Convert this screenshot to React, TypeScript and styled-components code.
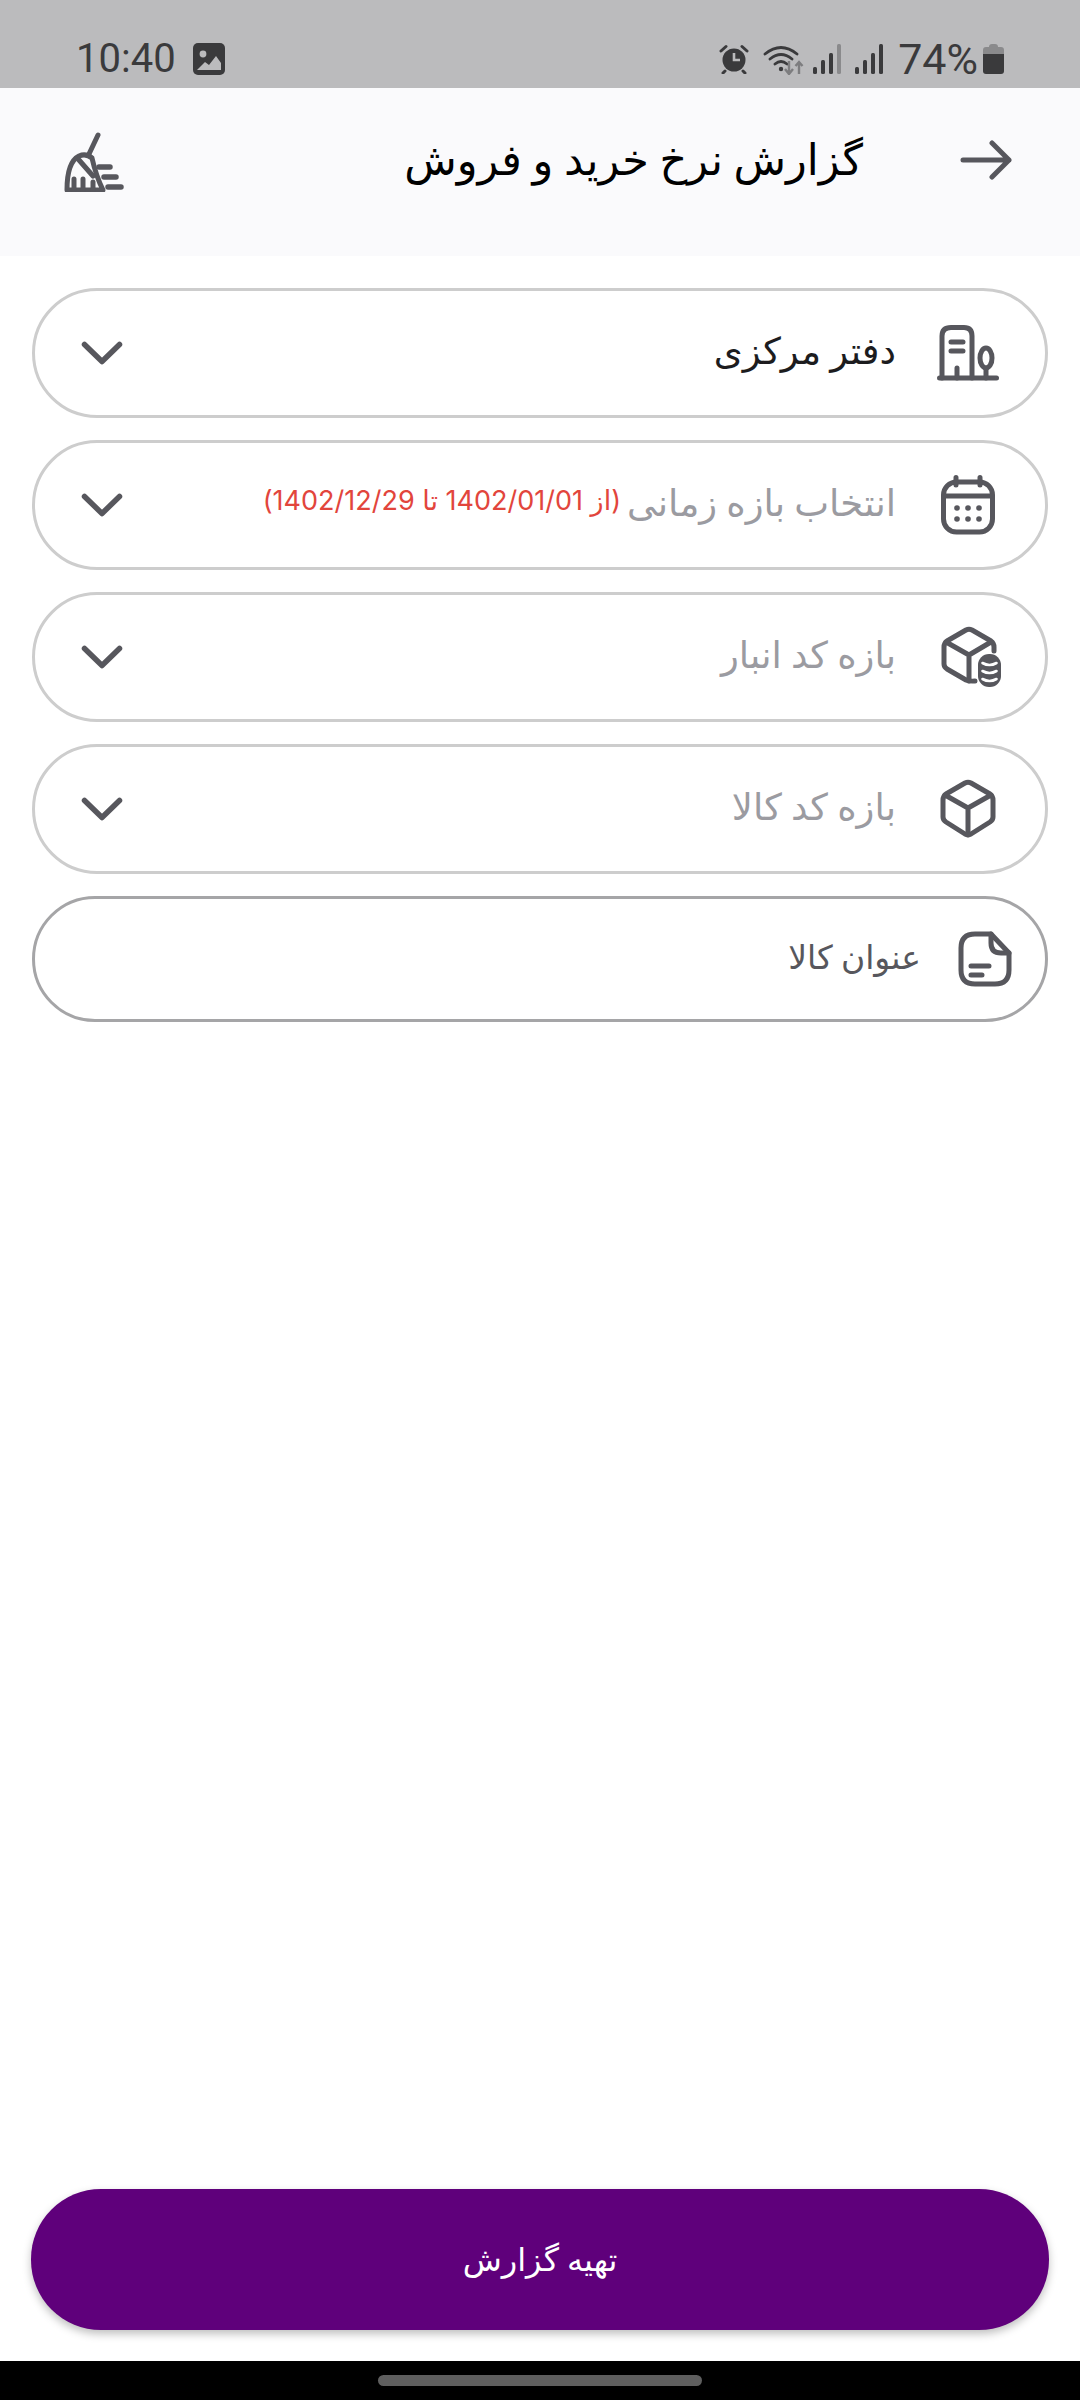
import styled, { createGlobalStyle } from "styled-components";

const GlobalStyle = createGlobalStyle`
  html, body {
    margin: 0;
    padding: 0;
    background: #ffffff;
  }
  * {
    box-sizing: border-box;
  }
`;

const Page = styled.div`
  width: 1080px;
  height: 2400px;
  display: flex;
  flex-direction: column;
  font-family: "Roboto", "DejaVu Sans", sans-serif;
  background: #ffffff;
`;

const StatusBar = styled.div`
  height: 88px;
  flex: none;
  background: #bbbbbd;
  display: flex;
  justify-content: space-between;
  align-items: flex-start;
  padding: 38px 76px 0 76px;
  color: #3a3a3c;
`;

const StatusGroup = styled.div`
  display: flex;
  align-items: center;
  height: 42px;
`;

const Clock = styled.span`
  font-size: 40px;
  line-height: 42px;
  margin-right: 17px;
`;

const Battery = styled.span`
  font-size: 43px;
  line-height: 42px;
  margin: 0 5px 0 15px;
`;

const StatusIcon = styled.svg<{ $gap?: number }>`
  display: block;
  flex: none;
  margin-left: ${(p) => p.$gap ?? 0}px;
`;

const Header = styled.header`
  height: 168px;
  flex: none;
  background: #fafafc;
  direction: rtl;
  display: flex;
  align-items: flex-start;
  padding: 44px 68px 0 64px;
`;

const Title = styled.h1`
  flex: 1;
  margin: 0;
  padding-right: 97px;
  font-size: 43px;
  line-height: 56px;
  font-weight: 400;
  color: #000000;
`;

const BackArrowSlot = styled.div`
  flex: none;
  margin-top: 8px;
`;

const Form = styled.div`
  flex: 1;
  direction: rtl;
  display: flex;
  flex-direction: column;
  gap: 22px;
  padding: 32px 32px 0 32px;
`;

const Row = styled.div<{ $input?: boolean }>`
  height: ${(p) => (p.$input ? 126 : 130)}px;
  border: 3px solid ${(p) => (p.$input ? "#a5a5a7" : "#cdcdcd")};
  border-radius: 65px;
  display: flex;
  align-items: center;
  padding: 0 ${(p) => (p.$input ? 32 : 44)}px 0 46px;
`;

const IconSlot = styled.div<{ $input?: boolean }>`
  width: ${(p) => (p.$input ? 56 : 66)}px;
  flex: none;
  display: flex;
  justify-content: center;
`;

const Label = styled.span<{ $tone: "value" | "hint" | "input" }>`
  margin-right: ${(p) => (p.$tone === "input" ? 36 : 39)}px;
  font-size: ${(p) => (p.$tone === "input" ? 33 : 37)}px;
  line-height: 48px;
  margin-top: -3px;
  white-space: nowrap;
  color: ${(p) =>
    p.$tone === "value" ? "#1c1c1e" : p.$tone === "hint" ? "#9b9ba1" : "#57575d"};
`;

const RangeNote = styled.span`
  font-family: "Inter", "DejaVu Sans", sans-serif;
  font-size: 27px;
  letter-spacing: 0.8px;
  line-height: 48px;
  margin-top: -8px;
  margin-right: 6px;
  white-space: nowrap;
  color: #e2453c;
`;

const Chevron = styled.svg`
  display: block;
  flex: none;
  margin-right: auto;
  margin-top: -1px;
`;

const ActionBar = styled.div`
  padding: 0 31px 31px 31px;
  flex: none;
`;

const ActionButton = styled.button`
  width: 100%;
  height: 141px;
  border: none;
  border-radius: 70px;
  background: #5f007b;
  color: #ffffff;
  font-family: inherit;
  font-size: 32px;
  direction: rtl;
  box-shadow: 0 4px 8px rgba(0, 0, 0, 0.25);
`;

const NavBar = styled.div`
  height: 39px;
  flex: none;
  background: #000000;
  display: flex;
  justify-content: center;
  padding-top: 14px;
`;

const NavHandle = styled.div`
  width: 324px;
  height: 11px;
  border-radius: 6px;
  background: #5f5f5f;
`;

const ink = "#57575d";

function ChevronDown() {
  return (
    <Chevron width="42" height="24" viewBox="0 0 42 24" fill="none" stroke={ink} strokeWidth="5.5" strokeLinecap="round" strokeLinejoin="round">
      <path d="M3.5 3.5 L21 20.5 L38.5 3.5" />
    </Chevron>
  );
}

function BuildingIcon() {
  return (
    <svg width="62" height="56" viewBox="0 0 62 56" fill="none" stroke={ink} strokeWidth="5" strokeLinecap="round">
      <path d="M2.5 53 H59.5" />
      <path d="M5 53 V11 Q5 2.5 14 2.5 H27 Q35 2.5 35 11 V53" />
      <path d="M14 17 H26 M14 26 H26" />
      <path d="M20 53 V43" />
      <ellipse cx="49" cy="33" rx="6" ry="10" />
      <path d="M49 43 V53" />
    </svg>
  );
}

function CalendarIcon() {
  return (
    <svg width="54" height="60" viewBox="0 0 54 60" fill="none" stroke={ink} strokeWidth="5" strokeLinecap="round">
      <rect x="2.5" y="7" width="49" height="50" rx="13" />
      <path d="M3 21 H51" />
      <path d="M15 2.5 V10 M39 2.5 V10" />
      <g fill={ink} stroke="none">
        <circle cx="16" cy="33" r="2.8" />
        <circle cx="27" cy="33" r="2.8" />
        <circle cx="38" cy="33" r="2.8" />
        <circle cx="16" cy="44" r="2.8" />
        <circle cx="27" cy="44" r="2.8" />
        <circle cx="38" cy="44" r="2.8" />
      </g>
    </svg>
  );
}

function BoxStockIcon() {
  return (
    <svg width="66" height="62" viewBox="-6 0 66 62" fill="none" stroke={ink} strokeWidth="5" strokeLinecap="round" strokeLinejoin="round">
      <path d="M53 25 V21 Q53 17 50 15 L31 4 Q28 2.5 25 4 L6 15 Q3 17 3 21 V38 Q3 41 6 43 L25 54 Q28 55.5 34 55" />
      <path d="M5 16 L28 29 L50 16 M28 29 V55" />
      <rect x="37" y="28" width="23" height="33" rx="11" fill={ink} stroke="none" />
      <path d="M41.5 37 Q48.5 41 55.5 37 M41.5 45 Q48.5 49 55.5 45 M41.5 53 Q48.5 57 55.5 53" stroke="#ffffff" strokeWidth="2.6" />
    </svg>
  );
}

function BoxIcon() {
  return (
    <svg width="56" height="60" viewBox="0 0 56 60" fill="none" stroke={ink} strokeWidth="5" strokeLinecap="round" strokeLinejoin="round">
      <path d="M50 15 L31 4 Q28 2.5 25 4 L6 15 Q3 17 3 21 V38 Q3 41 6 43 L25 55 Q28 56.5 31 55 L50 43 Q53 41 53 38 V21 Q53 17 50 15 Z" />
      <path d="M5 16 L28 29 L51 16 M28 29 V56" />
    </svg>
  );
}

function NoteIcon() {
  return (
    <svg width="54" height="56" viewBox="0 0 54 56" fill="none" stroke={ink} strokeWidth="5" strokeLinecap="round" strokeLinejoin="round">
      <path d="M33 3 H17 Q3 3 3 17 V39 Q3 53 17 53 H37 Q51 53 51 39 V22 L33 3 Z" />
      <path d="M33 3 V12 Q33 22 43 22 H51" />
      <path d="M13 35 H31 M13 44 H24" />
    </svg>
  );
}

function BackArrow() {
  return (
    <svg width="52" height="40" viewBox="0 0 52 40" fill="none" stroke={ink} strokeWidth="5" strokeLinecap="round" strokeLinejoin="round">
      <path d="M3 20 H49 M32 3 L49 20 L32 37" />
    </svg>
  );
}

function BroomIcon() {
  return (
    <svg width="60" height="60" viewBox="0 0 60 60" fill="none" stroke={ink} strokeWidth="5" strokeLinecap="round" strokeLinejoin="round">
      <path d="M34 3 L25 22" />
      <path d="M3 58 H39 Q32 44 28 26 Q22 21 15 24 Q3 30 3 58 Z" />
      <path d="M10 58 V47 M19 58 V47 M29 58 V50 M15 28 L29 44" />
      <path d="M35 35 H46 M40 45 H52 M44 55 H57" strokeWidth="5.5" />
    </svg>
  );
}

function App() {
  return (
    <Page>
      <GlobalStyle />
      <StatusBar>
        <StatusGroup>
          <Clock>10:40</Clock>
          <StatusIcon width="32" height="32" viewBox="0 0 32 32">
            <rect width="32" height="32" rx="5" fill="#3a3a3c" />
            <circle cx="10" cy="11" r="3.4" fill="#bbbbbd" />
            <path d="M4 27 L12 19 L16 22 L23 13 L28 20 V27 Z" fill="#bbbbbd" />
          </StatusIcon>
        </StatusGroup>
        <StatusGroup>
          <StatusIcon width="30" height="30" viewBox="0 0 30 30">
            <circle cx="15" cy="16" r="11.5" fill="#3a3a3c" />
            <path d="M15 9 V16 H21" stroke="#bbbbbd" strokeWidth="2.6" fill="none" />
            <path d="M2 7 L7 2.5 M28 7 L23 2.5 M6 27 L4 29 M24 27 L26 29" stroke="#3a3a3c" strokeWidth="3" strokeLinecap="round" />
          </StatusIcon>
          <StatusIcon $gap={14} width="41" height="31" viewBox="0 0 41 31" fill="none">
            <path d="M2 10 Q18 -3 34 10 M7 15 Q18 6 29 15 M12 20 Q18 15 24 20" stroke="#3a3a3c" strokeWidth="2.8" strokeLinecap="round" />
            <circle cx="18" cy="25" r="2.2" fill="#3a3a3c" />
            <path d="M26 17 V29 M22 25 L26 30 L30 25" stroke="#7d7d7f" strokeWidth="2.4" />
            <path d="M36 30 V19 M32.5 22 L36 18 L39.5 22" stroke="#7d7d7f" strokeWidth="2.4" />
          </StatusIcon>
          <StatusIcon $gap={9} width="28" height="30" viewBox="0 0 28 30">
            <rect x="0" y="23" width="4" height="7" rx="1.5" fill="#3a3a3c" />
            <rect x="8" y="16" width="4" height="14" rx="1.5" fill="#3a3a3c" />
            <rect x="16" y="9" width="4" height="21" rx="1.5" fill="#3a3a3c" />
            <rect x="24" y="0" width="4" height="30" rx="1.5" fill="#8a8a8c" />
          </StatusIcon>
          <StatusIcon $gap={14} width="28" height="30" viewBox="0 0 28 30">
            <rect x="0" y="23" width="4" height="7" rx="1.5" fill="#3a3a3c" />
            <rect x="8" y="16" width="4" height="14" rx="1.5" fill="#3a3a3c" />
            <rect x="16" y="9" width="4" height="21" rx="1.5" fill="#3a3a3c" />
            <rect x="24" y="0" width="4" height="30" rx="1.5" fill="#3a3a3c" />
          </StatusIcon>
          <Battery>74%</Battery>
          <StatusIcon width="21" height="30" viewBox="0 0 21 30">
            <path d="M6 3 Q6 0 9 0 H12 Q15 0 15 3 H18 Q21 3 21 6 V10 H0 V6 Q0 3 3 3 Z" fill="#8a8a8c" />
            <path d="M0 10 H21 V27 Q21 30 18 30 H3 Q0 30 0 27 Z" fill="#3a3a3c" />
          </StatusIcon>
        </StatusGroup>
      </StatusBar>
      <Header>
        <BackArrowSlot>
          <BackArrow />
        </BackArrowSlot>
        <Title>گزارش نرخ خرید و فروش</Title>
        <BroomIcon />
      </Header>
      <Form>
        <Row>
          <IconSlot>
            <BuildingIcon />
          </IconSlot>
          <Label $tone="value">دفتر مرکزی</Label>
          <ChevronDown />
        </Row>
        <Row>
          <IconSlot>
            <CalendarIcon />
          </IconSlot>
          <Label $tone="hint">انتخاب بازه زمانی</Label>
          <RangeNote>(از 1402/01/01 تا 1402/12/29)</RangeNote>
          <ChevronDown />
        </Row>
        <Row>
          <IconSlot>
            <BoxStockIcon />
          </IconSlot>
          <Label $tone="hint">بازه کد انبار</Label>
          <ChevronDown />
        </Row>
        <Row>
          <IconSlot>
            <BoxIcon />
          </IconSlot>
          <Label $tone="hint">بازه کد کالا</Label>
          <ChevronDown />
        </Row>
        <Row $input>
          <IconSlot $input>
            <NoteIcon />
          </IconSlot>
          <Label $tone="input">عنوان کالا</Label>
        </Row>
      </Form>
      <ActionBar>
        <ActionButton>تهیه گزارش</ActionButton>
      </ActionBar>
      <NavBar>
        <NavHandle />
      </NavBar>
    </Page>
  );
}

export default App;
